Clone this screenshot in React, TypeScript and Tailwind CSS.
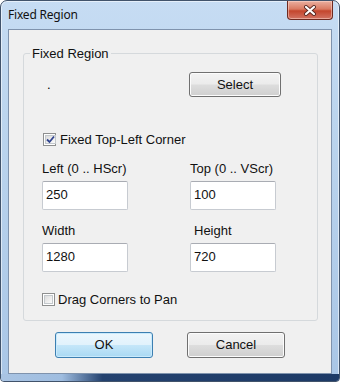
const Checkbox = ({ checked }: { checked?: boolean }) => (
  <span className="w-[13px] h-[13px] border border-[#8e8f8f] bg-white p-[1px] flex shrink-0">
    <span className="flex-1 border border-[#c3c8cc] bg-gradient-to-br from-[#dcdcdc] to-[#fbfbfb] flex items-center justify-center">
      {checked && (
        <svg width="9" height="9" viewBox="0 0 9 9">
          <path d="M1 4.5 L3.5 7 L8 1.5" fill="none" stroke="#31448f" strokeWidth="1.8" />
        </svg>
      )}
    </span>
  </span>
);

const Field = ({ value }: { value: string }) => (
  <div className="w-[86px] h-[29px] bg-white border border-[#c7cbd1] border-t-[#a9acb3] rounded-[2px] pl-[3px] pt-[5px] leading-[15px]">
    {value}
  </div>
);

const Button = ({ label, primary, w }: { label: string; primary?: boolean; w: string }) => (
  <div
    className={`${w} rounded-[3px] border flex items-center justify-center ${
      primary
        ? "border-[#3c7fb1] bg-[linear-gradient(to_bottom,#ecf7fd_0%,#e1f2fc_48%,#c4e6f9_52%,#a9d9f3_100%)] shadow-[inset_0_0_0_1px_#c9eafc]"
        : "border-[#707070] bg-[linear-gradient(to_bottom,#f3f3f3_0%,#ebebeb_48%,#dddddd_52%,#cfcfcf_100%)] shadow-[inset_0_0_0_1px_#fcfcfc]"
    }`}
  >
    {label}
  </div>
);

export default function App() {
  return (
    <div className="w-[340px] h-[382px] border border-[#41536b] rounded-t-[7px] rounded-b-[4px] overflow-hidden flex flex-col bg-[linear-gradient(to_bottom,#c6dcf3_0%,#bcd5ee_30%,#a9c6e6_100%)] shadow-[inset_0_0_0_1px_rgba(255,255,255,0.55)] font-['Liberation_Sans',Arial,sans-serif] text-[13px] text-[#111]">
      {/* title bar */}
      <div className="h-[28px] flex justify-between items-start">
        <span className="pl-[7px] pt-[6px] text-[12px] leading-[16px] font-['Noto_Sans',sans-serif] tracking-[-0.2px] text-[#111]">
          Fixed Region
        </span>
        <div className="mr-[6px] w-[46px] h-[19px] border border-[#6e2a20] border-t-0 rounded-b-[4px] bg-[linear-gradient(to_bottom,#eab0a0_0%,#d97a62_45%,#c4462d_55%,#d27363_100%)] shadow-[inset_0_0_0_1px_rgba(255,220,210,0.5)] flex items-center justify-center">
          <svg width="14" height="11" viewBox="0 0 14 11">
            <path d="M3 2 L11 9 M11 2 L3 9" stroke="#5a2a24" strokeWidth="4" strokeLinecap="round" />
            <path d="M3 2 L11 9 M11 2 L3 9" stroke="#ffffff" strokeWidth="2.2" strokeLinecap="round" />
          </svg>
        </div>
      </div>

      {/* client area */}
      <div className="mx-[7px] h-[345px] border border-[#7f93ad] bg-[#f0f0f0] flex flex-col">
        <div className="relative ml-[14px] mt-[23px] w-[295px] h-[268px] border border-[#d5d9dc] rounded-[3px] pl-[18px] flex flex-col leading-[15px]">
          <span className="absolute left-[6px] top-[-8px] px-[2px] bg-[#f0f0f0]">Fixed Region</span>

          <div className="mt-[18px] h-[25px] flex items-center">
            <span className="w-[147px] pl-[5px] text-black">.</span>
            <Button label="Select" w="w-[92px] h-[25px]" />
          </div>

          <div className="mt-[35px] flex items-center gap-[4px] ml-[1px]">
            <Checkbox checked />
            <span>Fixed Top-Left Corner</span>
          </div>

          <div className="mt-[14px] flex">
            <span className="w-[148px]">Left (0 .. HScr)</span>
            <span>Top (0 .. VScr)</span>
          </div>
          <div className="mt-[5px] flex gap-[62px]">
            <Field value="250" />
            <Field value="100" />
          </div>

          <div className="mt-[13px] flex">
            <span className="w-[152px]">Width</span>
            <span>Height</span>
          </div>
          <div className="mt-[5px] flex gap-[62px]">
            <Field value="1280" />
            <Field value="720" />
          </div>

          <div className="mt-[20px] flex items-center gap-[3px]">
            <Checkbox />
            <span>Drag Corners to Pan</span>
          </div>
        </div>

        <div className="mt-[11px] ml-[46px] flex gap-[34px]">
          <Button label="OK" primary w="w-[98px] h-[26px]" />
          <Button label="Cancel" w="w-[98px] h-[26px]" />
        </div>
      </div>

      {/* bottom frame */}
      <div className="flex-1 bg-[linear-gradient(to_right,#a9c4e3_0%,#9fbde0_18%,#24426f_30%,#1d3a66_100%)]" />
    </div>
  );
}
